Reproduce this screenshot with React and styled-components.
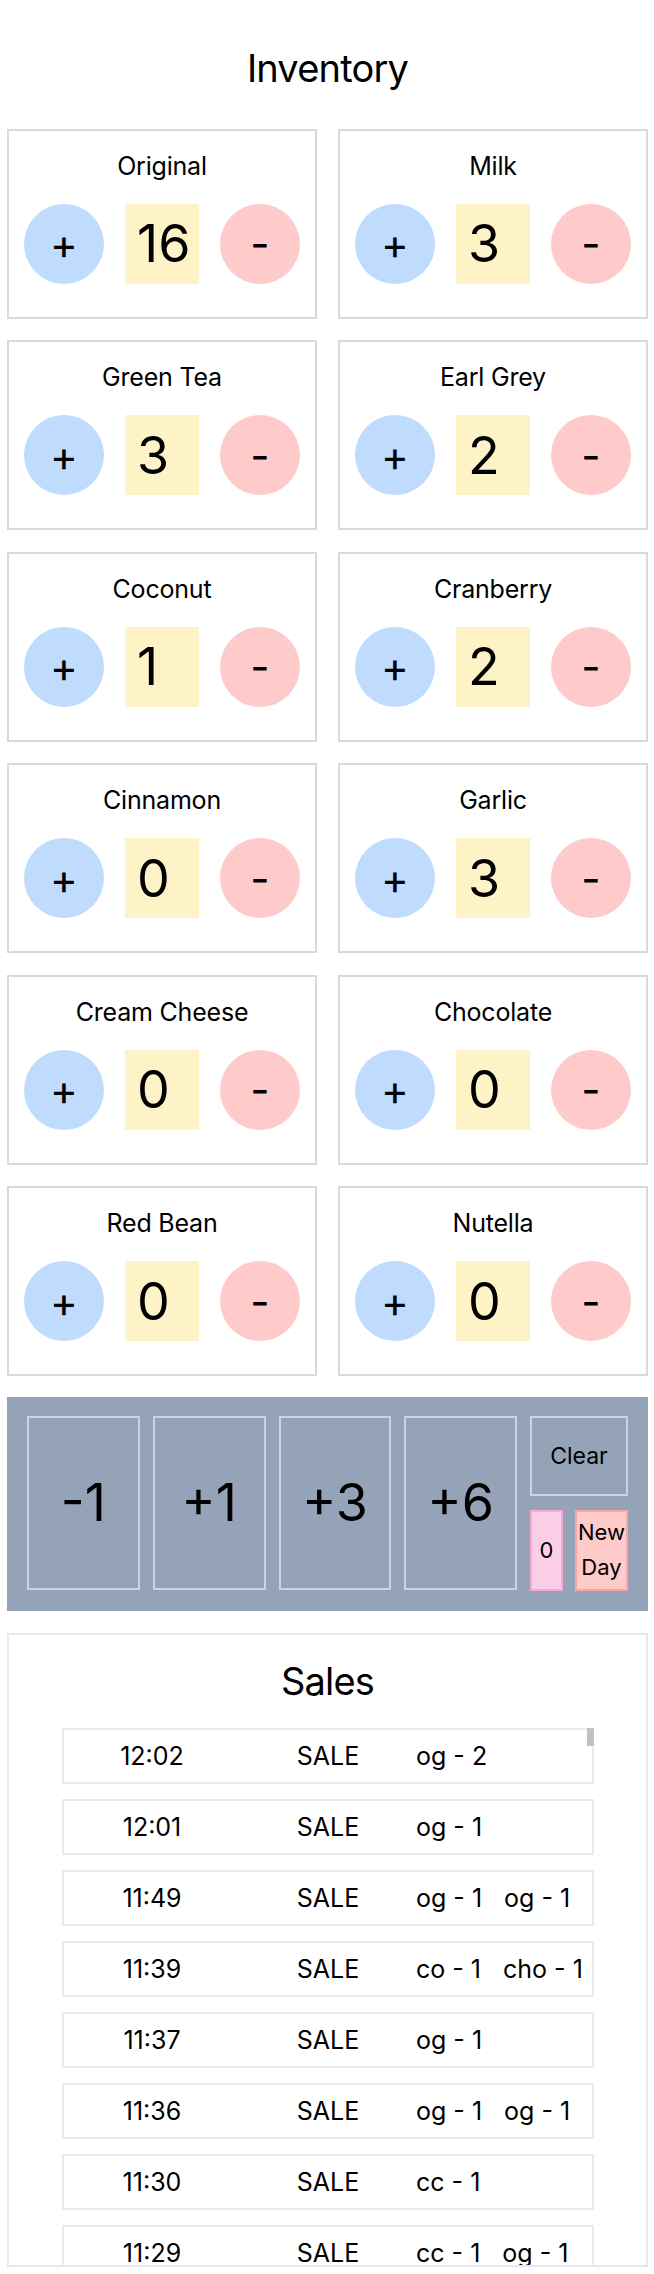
import React, { useState } from 'react';
import styled, { createGlobalStyle } from 'styled-components';

const GlobalStyle = createGlobalStyle`
  html, body {
    margin: 0;
    background: #fff;
  }
  body {
    font-family: Inter, "Noto Sans", sans-serif;
    color: #000;
  }
  * {
    box-sizing: border-box;
  }
`;

const Page = styled.div`
  padding: 0 6px 8px 7px;
`;

const Heading = styled.h1`
  margin: ${(p) => p.$margin};
  font-size: 38px;
  font-weight: 400;
  letter-spacing: -0.8px;
  line-height: 48px;
  text-align: center;
`;

const FlavourGrid = styled.div`
  display: grid;
  grid-template-columns: 1fr 1fr;
  column-gap: 21px;
  row-gap: 21.5px;
`;

const Card = styled.div`
  height: 190px;
  border: 2px solid #d6dae0;
  padding-top: 21px;
  display: flex;
  flex-direction: column;
  align-items: center;
`;

const CardTitle = styled.div`
  font-size: 25px;
  line-height: 28px;
  letter-spacing: -0.2px;
`;

const Controls = styled.div`
  display: flex;
  align-items: center;
  gap: 21px;
  margin-top: 24px;
`;

const RoundButton = styled.button`
  width: 80px;
  height: 80px;
  border: none;
  border-radius: 50%;
  background: ${(p) => p.$bg};
  font-family: inherit;
  font-size: 42px;
  color: #000;
  padding: 0;
  display: flex;
  align-items: center;
  justify-content: center;
  cursor: pointer;
`;

const Count = styled.div`
  width: 74px;
  height: 80px;
  background: #fef3c7;
  font-size: 52px;
  padding-left: 12px;
  display: flex;
  align-items: center;
`;

const Panel = styled.div`
  margin-top: 20.5px;
  background: #94a3b8;
  padding: 19px 20px 20px;
  display: flex;
  gap: 13px;
`;

const StepButton = styled.button`
  flex: 1;
  height: 174px;
  border: 2px solid #cbd5e1;
  background: transparent;
  font-family: inherit;
  font-size: 52px;
  color: #000;
  padding: 0;
  cursor: pointer;
`;

const Side = styled.div`
  width: 98px;
  display: flex;
  flex-direction: column;
  gap: 14px;
`;

const ClearButton = styled.button`
  height: 80px;
  border: 2px solid #cbd5e1;
  background: transparent;
  font-family: inherit;
  font-size: 23px;
  color: #000;
  cursor: pointer;
`;

const SideRow = styled.div`
  display: flex;
  justify-content: space-between;
  height: 81px;
`;

const SmallButton = styled.button`
  width: ${(p) => p.$w}px;
  height: 81px;
  padding: 0;
  border: 2px solid ${(p) => p.$border};
  background: ${(p) => p.$bg};
  font-family: inherit;
  font-size: 22px;
  line-height: 35px;
  color: #000;
  cursor: pointer;
`;

const SalesCard = styled.div`
  margin-top: 22px;
  height: 634px;
  border: 2px solid #e6e8ec;
  display: flex;
  flex-direction: column;
`;

const SalesWrap = styled.div`
  position: relative;
  flex: 1;
  min-height: 0;
  width: 532px;
  margin-left: 53px;
`;

const SalesList = styled.div`
  height: 100%;
  overflow: hidden;
  display: flex;
  flex-direction: column;
  gap: 15px;
`;

const ScrollThumb = styled.div`
  position: absolute;
  top: 0;
  right: 0;
  width: 7px;
  height: 18px;
  background: #c1c1c1;
`;

const SaleRow = styled.div`
  flex-shrink: 0;
  height: 56px;
  border: 2px solid #e8eaee;
  display: grid;
  grid-template-columns: repeat(3, 1fr);
  align-items: center;
  font-size: 25px;
`;

const Cell = styled.div`
  text-align: center;
`;

const Items = styled.div`
  display: flex;
  gap: 22px;
  white-space: nowrap;
`;

const flavours = [
  ['Original', 16],
  ['Milk', 3],
  ['Green Tea', 3],
  ['Earl Grey', 2],
  ['Coconut', 1],
  ['Cranberry', 2],
  ['Cinnamon', 0],
  ['Garlic', 3],
  ['Cream Cheese', 0],
  ['Chocolate', 0],
  ['Red Bean', 0],
  ['Nutella', 0],
];

const sales = [
  ['12:02', ['og - 2']],
  ['12:01', ['og - 1']],
  ['11:49', ['og - 1', 'og - 1']],
  ['11:39', ['co - 1', 'cho - 1']],
  ['11:37', ['og - 1']],
  ['11:36', ['og - 1', 'og - 1']],
  ['11:30', ['cc - 1']],
  ['11:29', ['cc - 1', 'og - 1']],
  ['11:21', ['og - 1']],
  ['11:14', ['gt - 1']],
];

function App() {
  const [counts, setCounts] = useState(flavours.map((f) => f[1]));

  const change = (index, delta) => {
    setCounts(counts.map((c, i) => (i === index ? Math.max(0, c + delta) : c)));
  };

  return (
    <Page>
      <GlobalStyle />
      <Heading $margin="44px 0 36.5px">Inventory</Heading>
      <FlavourGrid>
        {flavours.map(([name], index) => (
          <Card key={name}>
            <CardTitle>{name}</CardTitle>
            <Controls>
              <RoundButton $bg="#bfdbfe" onClick={() => change(index, 1)}>+</RoundButton>
              <Count>{counts[index]}</Count>
              <RoundButton $bg="#fecaca" onClick={() => change(index, -1)}>-</RoundButton>
            </Controls>
          </Card>
        ))}
      </FlavourGrid>

      <Panel>
        <StepButton>-1</StepButton>
        <StepButton>+1</StepButton>
        <StepButton>+3</StepButton>
        <StepButton>+6</StepButton>
        <Side>
          <ClearButton>Clear</ClearButton>
          <SideRow>
            <SmallButton $w={33} $bg="#fbcfe8" $border="#f9a8d4">0</SmallButton>
            <SmallButton $w={53} $bg="#fecaca" $border="#fca5a5">New Day</SmallButton>
          </SideRow>
        </Side>
      </Panel>

      <SalesCard>
        <Heading $margin="22px 0 23px">Sales</Heading>
        <SalesWrap>
          <SalesList>
            {sales.map(([time, items], index) => (
              <SaleRow key={index}>
                <Cell>{time}</Cell>
                <Cell>SALE</Cell>
                <Items>
                  {items.map((item, i) => (
                    <span key={i}>{item}</span>
                  ))}
                </Items>
              </SaleRow>
            ))}
          </SalesList>
          <ScrollThumb />
        </SalesWrap>
      </SalesCard>
    </Page>
  );
}

export default App;
